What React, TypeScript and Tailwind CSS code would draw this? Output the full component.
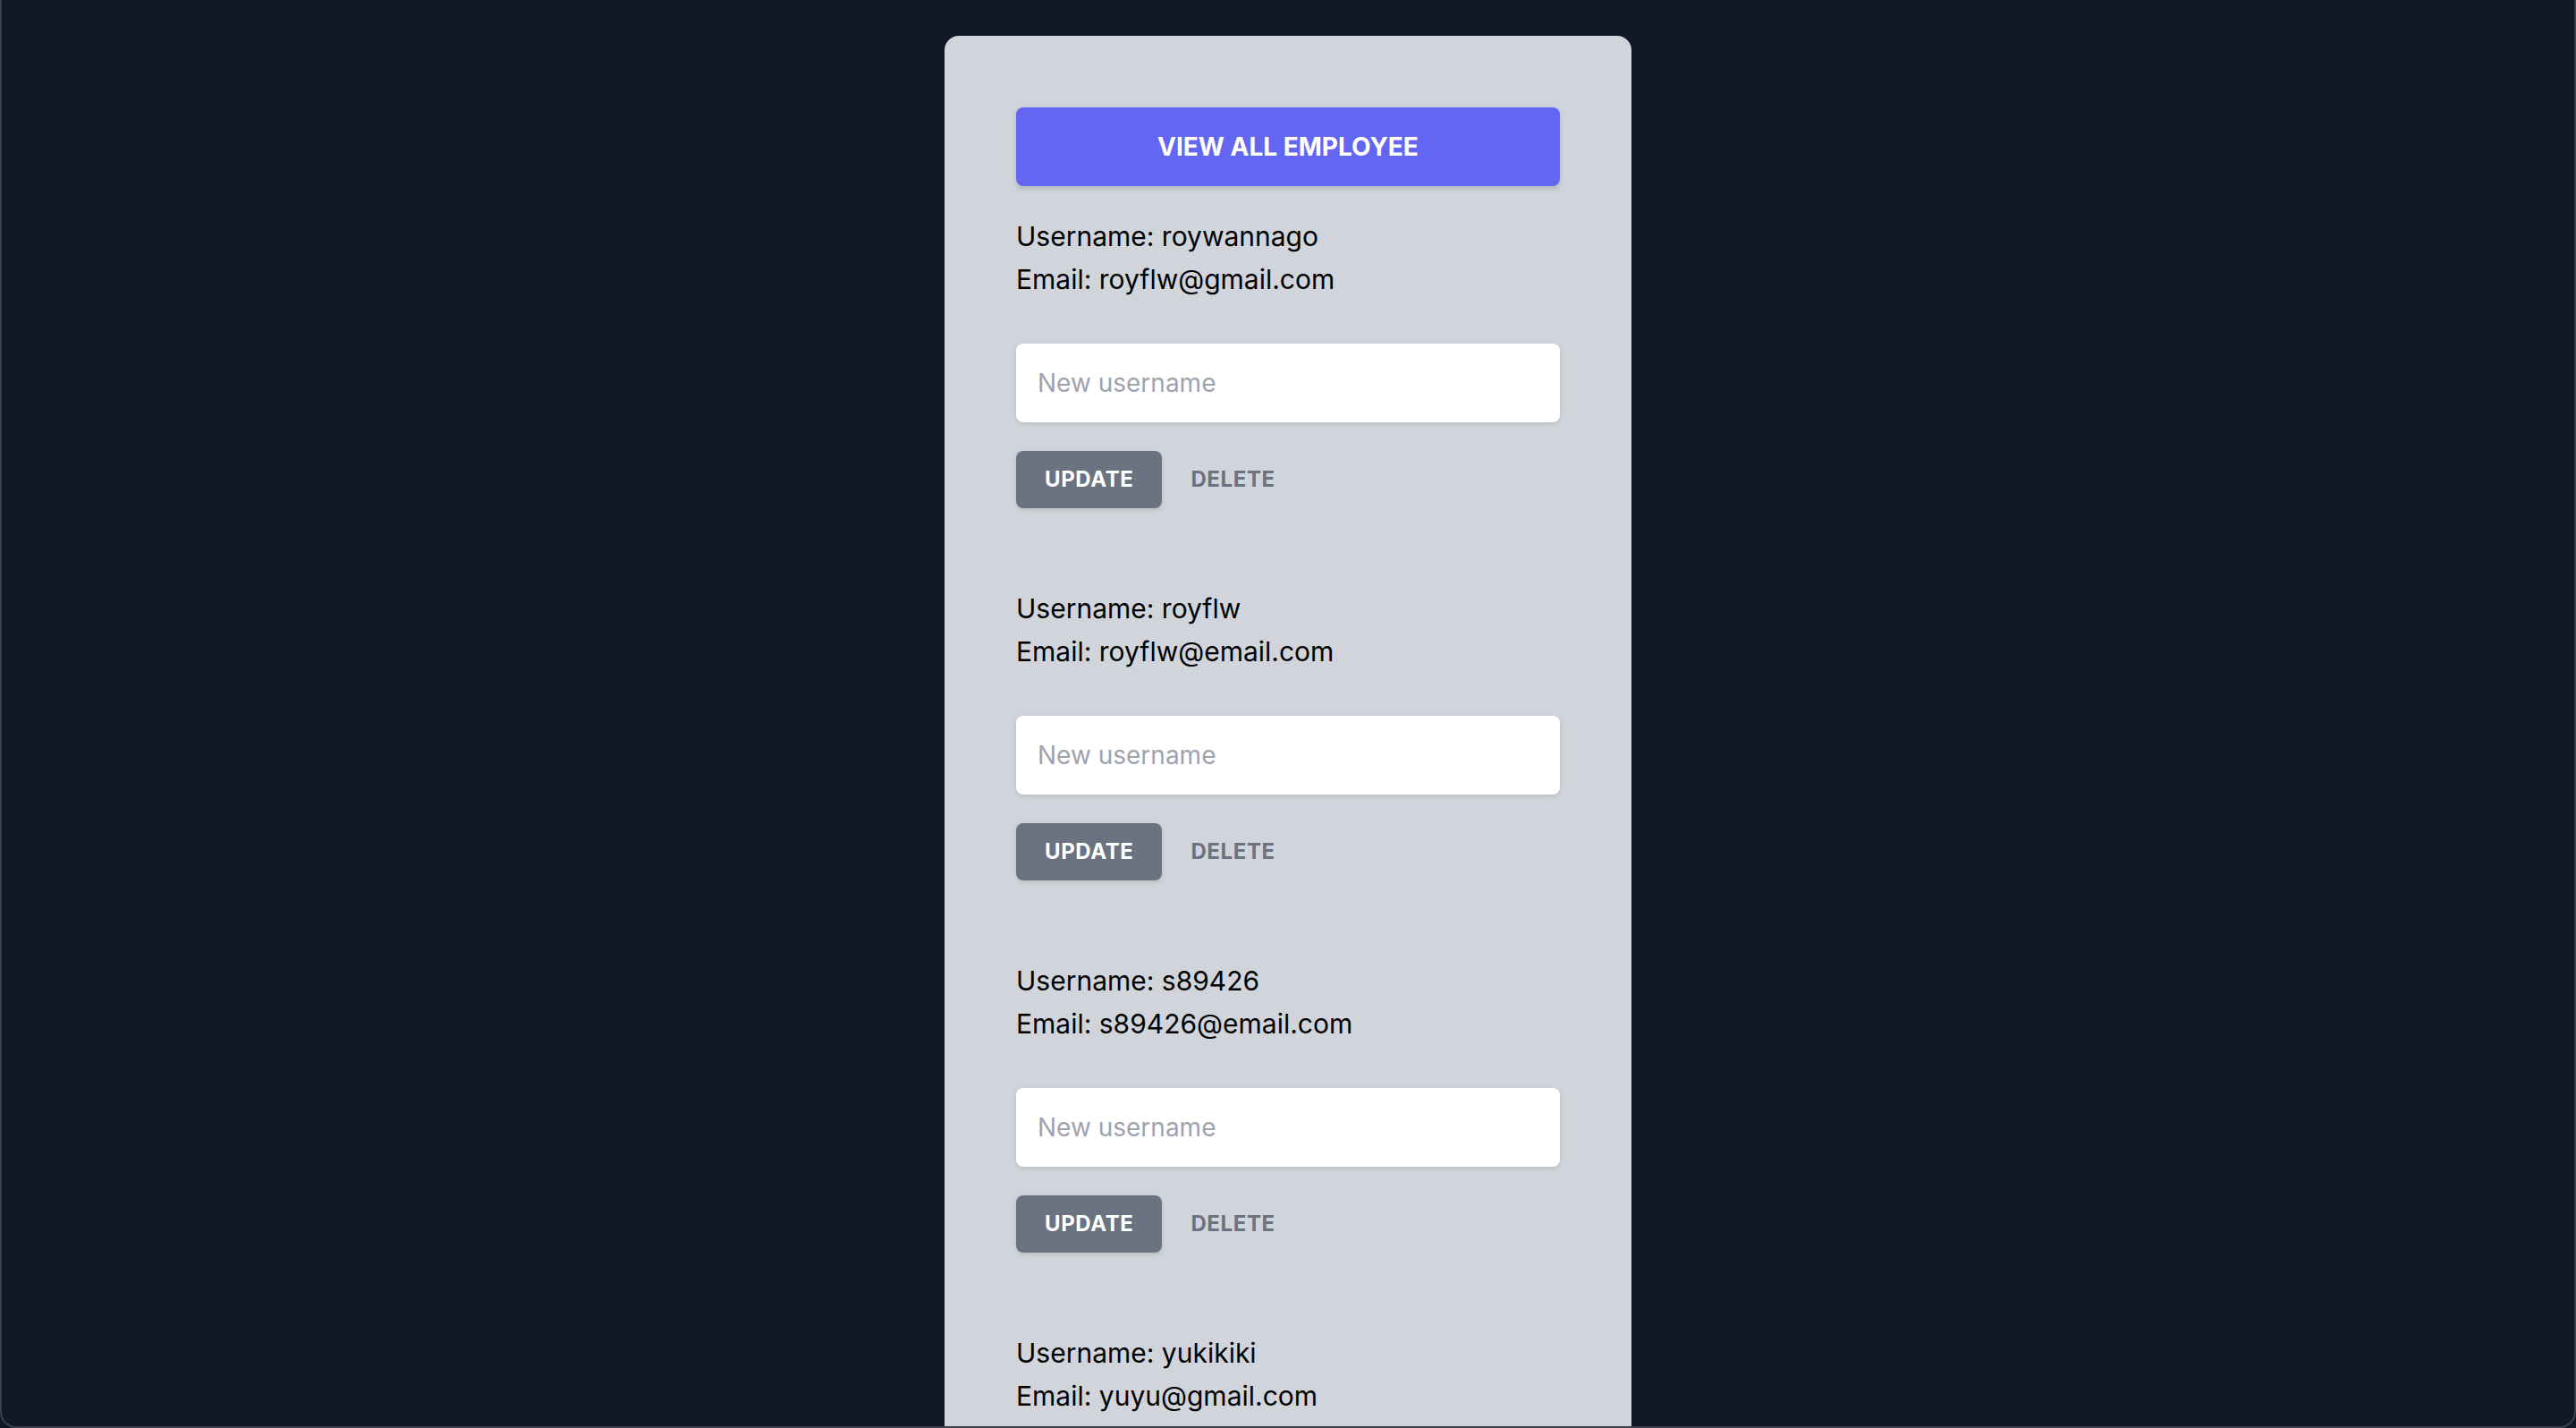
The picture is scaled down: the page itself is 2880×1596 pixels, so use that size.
import React, { useState } from 'react';

type Employee = {
  username: string;
  email: string;
};

const initialEmployees: Employee[] = [
  { username: 'roywannago', email: 'royflw@gmail.com' },
  { username: 'royflw', email: 'royflw@email.com' },
  { username: 's89426', email: 's89426@email.com' },
  { username: 'yukikiki', email: 'yuyu@gmail.com' },
];

function EmployeeRow({ employee }: { employee: Employee }) {
  const [value, setValue] = useState('');

  return (
    <div className="mt-8 pb-14">
      <p className="text-[30px] leading-[48px] text-black">Username: {employee.username}</p>
      <p className="text-[30px] leading-[48px] text-black">Email: {employee.email}</p>
      <input
        type="text"
        value={value}
        onChange={(e) => setValue(e.target.value)}
        placeholder="New username"
        className="mt-12 w-full rounded-[8px] bg-white px-6 py-6 text-[28px] leading-[40px] text-[#374151] shadow-[0_2px_5px_rgba(0,0,0,0.12)] outline-none placeholder:text-[#9ca3af]"
      />
      <div className="mt-8 flex items-center">
        <button className="rounded-[8px] bg-[#6b7280] px-8 py-4 text-[24px] font-bold leading-[32px] uppercase tracking-wide text-white shadow-[0_2px_5px_rgba(0,0,0,0.12)]">
          Update
        </button>
        <button className="px-8 py-4 text-[24px] font-bold leading-[32px] uppercase tracking-wide text-[#6b7280]">
          Delete
        </button>
      </div>
    </div>
  );
}

export default function App() {
  const [employees] = useState<Employee[]>(initialEmployees);

  return (
    <div className="relative min-h-screen bg-[#111827] font-['Inter','Liberation_Sans',sans-serif]">
      <div className="flex justify-center">
        <div className="mt-10 w-[768px] rounded-[16px] bg-[#d1d5db] px-20 pt-20">
          <button className="w-full rounded-[8px] bg-[#6366f1] py-6 text-[28px] font-bold leading-[40px] uppercase text-white shadow-[0_3px_6px_rgba(0,0,0,0.15)]">
            View all employee
          </button>
          {employees.map((emp) => (
            <EmployeeRow key={emp.username} employee={emp} />
          ))}
        </div>
      </div>
      {/* window frame */}
      <div className="pointer-events-none fixed inset-0 rounded-b-[18px] border-x-2 border-b-2 border-[#3d404b]" />
    </div>
  );
}
